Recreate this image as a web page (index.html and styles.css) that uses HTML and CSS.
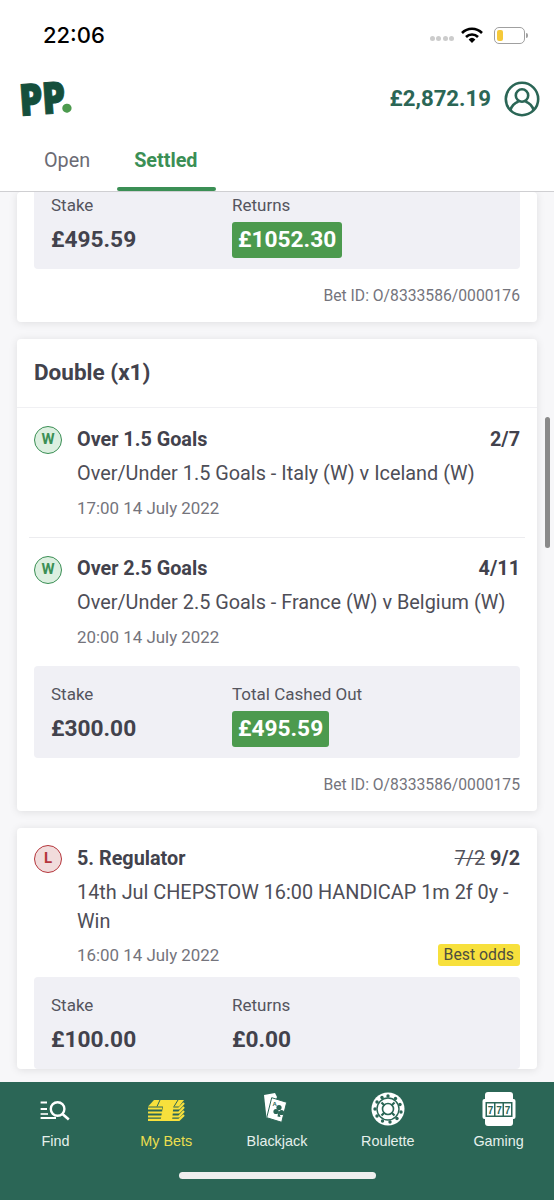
FILE: index.html
```html
<!DOCTYPE html>
<html lang="en">
<head>
  <meta charset="UTF-8">
  <meta name="viewport" content="width=device-width, initial-scale=1.0">
  <title>My Bets</title>
  <link rel="stylesheet" href="styles.css">
</head>
<body>
  <div class="app">
    <div class="status-bar">
      <span class="time">22:06</span>
      <div class="status-icons">
        <span class="signal"><i></i><i></i><i></i><i></i></span>
        <svg class="wifi" width="22" height="17" viewBox="0 0 22 17">
          <path d="M1 6 A14 14 0 0 1 21 6" fill="none" stroke="#000" stroke-width="2.6"/>
          <path d="M5 10 A8.5 8.5 0 0 1 17 10" fill="none" stroke="#000" stroke-width="2.6"/>
          <path d="M7.6 12.4 A5 5 0 0 1 14.4 12.4 L11 16 Z" fill="#000"/>
        </svg>
        <span class="battery"><span class="battery-level"></span></span>
      </div>
    </div>

    <header class="top-bar">
      <div class="logo"><span class="logo-text">PP</span><span class="logo-dot"></span></div>
      <div class="account">
        <span class="balance">£2,872.19</span>
        <svg width="36" height="36" viewBox="0 0 36 36" fill="none" stroke="#2b6656" stroke-width="2.6">
          <circle cx="18" cy="18" r="16.2"/>
          <circle cx="18" cy="14.5" r="6.2"/>
          <path d="M6.5 29 C8 23.5 12 21.5 14.5 20.5 M29.5 29 C28 23.5 24 21.5 21.5 20.5"/>
        </svg>
      </div>
    </header>

    <nav class="tabs">
      <a class="tab">Open</a>
      <a class="tab active">Settled</a>
    </nav>

    <main class="bets">
      <section class="card">
        <div class="stats stats-cut">
          <div class="stat">
            <div class="stat-label">Stake</div>
            <div class="stat-value">£495.59</div>
          </div>
          <div class="stat">
            <div class="stat-label">Returns</div>
            <div class="stat-value won">£1052.30</div>
          </div>
        </div>
        <div class="bet-id">Bet ID: O/8333586/0000176</div>
      </section>

      <section class="card">
        <h2 class="card-title">Double (x1)</h2>
        <div class="leg">
          <span class="badge badge-win">W</span>
          <div class="leg-body">
            <div class="leg-head"><strong>Over 1.5 Goals</strong><strong>2/7</strong></div>
            <div class="leg-market">Over/Under 1.5 Goals - Italy (W) v Iceland (W)</div>
            <div class="leg-date">17:00 14 July 2022</div>
          </div>
        </div>
        <div class="leg leg-next">
          <span class="badge badge-win">W</span>
          <div class="leg-body">
            <div class="leg-head"><strong>Over 2.5 Goals</strong><strong>4/11</strong></div>
            <div class="leg-market">Over/Under 2.5 Goals - France (W) v Belgium (W)</div>
            <div class="leg-date">20:00 14 July 2022</div>
          </div>
        </div>
        <div class="stats">
          <div class="stat">
            <div class="stat-label">Stake</div>
            <div class="stat-value">£300.00</div>
          </div>
          <div class="stat">
            <div class="stat-label">Total Cashed Out</div>
            <div class="stat-value won">£495.59</div>
          </div>
        </div>
        <div class="bet-id">Bet ID: O/8333586/0000175</div>
      </section>

      <section class="card">
        <div class="leg leg-single">
          <span class="badge badge-loss">L</span>
          <div class="leg-body">
            <div class="leg-head"><strong>5. Regulator</strong><span><s class="old-odds">7/2</s> <strong>9/2</strong></span></div>
            <div class="leg-market">14th Jul CHEPSTOW 16:00 HANDICAP 1m 2f 0y - Win</div>
            <div class="leg-foot">
              <div class="leg-date">16:00 14 July 2022</div>
              <span class="tag">Best odds</span>
            </div>
          </div>
        </div>
        <div class="stats">
          <div class="stat">
            <div class="stat-label">Stake</div>
            <div class="stat-value">£100.00</div>
          </div>
          <div class="stat">
            <div class="stat-label">Returns</div>
            <div class="stat-value">£0.00</div>
          </div>
        </div>
      </section>

      <div class="scrollbar"></div>
    </main>

    <footer class="bottom-nav">
      <div class="nav-items">
        <a class="nav-item">
          <svg width="32" height="36" viewBox="0 0 32 36" fill="none" stroke="#fff">
            <path d="M1.6 11.5 H8 M1.6 18 H8 M1.6 27 H17" stroke-width="2.2"/>
            <path d="M1.6 23 H9" stroke-width="1.6"/>
            <circle cx="18.6" cy="18" r="6.8" stroke-width="2.4"/>
            <path d="M23.5 23 L29.8 28.5" stroke-width="2.6"/>
          </svg>
          <span>Find</span>
        </a>
        <a class="nav-item current">
          <svg width="38" height="36" viewBox="0 0 38 36">
            <path d="M7 9 H37 L32 15.5 H1 Z" fill="#f7e03c"/>
            <path d="M1 17.5 H15 M1 21.5 H15 M1 25.5 H15 M1 28.8 H15" stroke="#f7e03c" stroke-width="2.2"/>
            <path d="M24 17.5 H32 L37 12 M24 21.5 H32 L37 16 M24 25.5 H32 L37 20 M24 28.8 H32 L37 24" fill="none" stroke="#f7e03c" stroke-width="2.2"/>
            <path d="M17 9 H27 L25 30 H13.5 Z" fill="#f7e03c"/>
            <path d="M13 9 L10 15.5 M31 9 L27 15.5" stroke="#2b6656" stroke-width="1"/>
          </svg>
          <span>My Bets</span>
        </a>
        <a class="nav-item">
          <svg width="30" height="36" viewBox="0 0 30 36">
            <path d="M2 4 L13 2 L15 6 L6 26 L4.5 27 Z" fill="#fff"/>
            <path d="M9.7 6.7 L24.7 11.3 L19.7 31.3 L4.7 26.7 Z" fill="#fff" stroke="#2b6656" stroke-width="1"/>
            <text x="10.5" y="15" class="card-pip">A</text>
            <circle cx="17" cy="16.5" r="2.6" fill="#2b6656"/>
            <circle cx="14" cy="20.5" r="2.6" fill="#2b6656"/>
            <circle cx="19.5" cy="21.5" r="2.6" fill="#2b6656"/>
            <path d="M16.5 19 L15.5 25.5 L18.5 26 Z" fill="#2b6656"/>
          </svg>
          <span>Blackjack</span>
        </a>
        <a class="nav-item">
          <svg width="34" height="36" viewBox="0 0 34 36">
            <circle cx="17" cy="18" r="16.5" fill="#fff"/>
            <circle cx="17" cy="18" r="11" fill="none" stroke="#2b6656" stroke-width="1.4"/>
            <g fill="#2b6656">
              <circle cx="17" cy="5" r="1.7"/><circle cx="24.5" cy="7.5" r="1.7"/><circle cx="29" cy="13.5" r="1.7"/>
              <circle cx="30" cy="21" r="1.7"/><circle cx="26" cy="27.5" r="1.7"/><circle cx="19" cy="31" r="1.7"/>
              <circle cx="11.5" cy="30" r="1.7"/><circle cx="6" cy="25" r="1.7"/><circle cx="4" cy="18" r="1.7"/>
              <circle cx="6" cy="11" r="1.7"/><circle cx="11" cy="6.5" r="1.7"/>
            </g>
            <circle cx="17" cy="18" r="5.5" fill="none" stroke="#2b6656" stroke-width="1.6"/>
            <path d="M10.5 11.5 L13.5 14.5 M23.5 11.5 L20.5 14.5 M10.5 24.5 L13.5 21.5 M23.5 24.5 L20.5 21.5" stroke="#2b6656" stroke-width="2.2"/>
          </svg>
          <span>Roulette</span>
        </a>
        <a class="nav-item">
          <svg width="34" height="36" viewBox="0 0 34 36">
            <rect x="3" y="1" width="28" height="34" rx="3" fill="#fff"/>
            <rect x="0.5" y="8" width="33" height="20" rx="2" fill="#fff"/>
            <rect x="3.5" y="11" width="27" height="15" fill="#2b6656"/>
            <rect x="5" y="12.5" width="7" height="12" fill="#fff"/>
            <rect x="13.5" y="12.5" width="7" height="12" fill="#fff"/>
            <rect x="22" y="12.5" width="7" height="12" fill="#fff"/>
            <text x="8.5" y="22.5" class="reel">7</text>
            <text x="17" y="22.5" class="reel">7</text>
            <text x="25.5" y="22.5" class="reel">7</text>
          </svg>
          <span>Gaming</span>
        </a>
      </div>
      <div class="home-indicator"></div>
    </footer>
  </div>
</body>
</html>
```

FILE: styles.css
```css
* {
  box-sizing: border-box;
}

html, body {
  margin: 0;
  padding: 0;
  height: 100%;
}

body {
  font-family: Roboto, Arial, sans-serif;
  background-color: #f7f7f9;
  color: #42424c;
  overflow: hidden;
}

.app {
  height: 1200px;
  display: flex;
  flex-direction: column;
}

/* status bar */
.status-bar {
  height: 70px;
  flex-shrink: 0;
  background-color: #fff;
  display: flex;
  align-items: center;
  justify-content: space-between;
  padding: 0 29px 0 43px;
}

.time {
  font-family: Inter, Arial, sans-serif;
  font-size: 22px;
  font-weight: 500;
  color: #000;
}

.status-icons {
  display: flex;
  align-items: center;
}

.signal {
  display: flex;
  gap: 1.5px;
  margin: 7px 7px 0 0;
}

.signal i {
  width: 5px;
  height: 5px;
  border-radius: 50%;
  background-color: #ccc;
}

.wifi {
  margin-right: 11px;
}

.battery {
  position: relative;
  width: 31px;
  height: 17px;
  padding: 2px;
  border: 1px solid #a0a0a0;
  border-radius: 5px;
}

.battery::after {
  content: "";
  position: absolute;
  right: -4px;
  top: 5px;
  width: 2px;
  height: 5px;
  background-color: #a0a0a0;
  border-radius: 0 2px 2px 0;
}

.battery-level {
  display: block;
  width: 6px;
  height: 100%;
  background-color: #f5c93a;
  border-radius: 2px;
}

/* header */
.top-bar {
  height: 58px;
  flex-shrink: 0;
  background-color: #fff;
  display: flex;
  align-items: center;
  justify-content: space-between;
  padding: 0 14px 0 19px;
}

.logo {
  display: flex;
  align-items: flex-end;
  transform: rotate(-4deg) scaleX(0.85);
  transform-origin: left center;
}

.logo-text {
  font-family: "Open Sans", Arial, sans-serif;
  font-size: 44px;
  font-weight: 800;
  line-height: 36px;
  letter-spacing: -1px;
  color: #154f3c;
  -webkit-text-stroke: 1px #154f3c;
}

.logo-dot {
  width: 11px;
  height: 9.5px;
  margin: 0 0 1px -4px;
  border-radius: 50%;
  background-color: #4c9a4e;
}

.account {
  display: flex;
  align-items: center;
  gap: 13px;
}

.balance {
  margin-bottom: 3px;
  font-size: 22.2px;
  font-weight: 700;
  color: #2b6656;
}

/* tabs */
.tabs {
  height: 64px;
  flex-shrink: 0;
  background-color: #fff;
  border-bottom: 1px solid #cfcfd2;
  display: flex;
  padding-left: 27px;
}

.tab {
  position: relative;
  height: 63px;
  padding: 15px 17px 0;
  font-size: 19.8px;
  line-height: 36px;
  color: #6b6b74;
}

.tab.active {
  margin-left: 10px;
  padding-right: 19px;
  font-weight: 700;
  color: #3b8f55;
}

.tab.active::after {
  content: "";
  position: absolute;
  left: 0;
  right: 0;
  bottom: 0;
  height: 4px;
  border-radius: 2px;
  background-color: #3b8f55;
}

/* bets list */
.bets {
  position: relative;
  flex: 1;
  min-height: 0;
  overflow: hidden;
  padding: 0 17px;
  display: flex;
  flex-direction: column;
  gap: 17px;
}

.card {
  flex-shrink: 0;
  background-color: #fff;
  border-radius: 4px;
  padding: 0 17px;
  box-shadow: 0 1px 8px rgba(0, 0, 0, 0.1);
}

.card-title {
  margin: 0 -17px;
  padding: 0 17px;
  height: 69px;
  border-bottom: 1px solid #f0f0f3;
  font-size: 22.5px;
  font-weight: 700;
  line-height: 66px;
}

.leg {
  display: flex;
  gap: 15px;
  padding-top: 17px;
  height: 129px;
}

.card-title + .leg {
  padding-top: 18px;
}

.leg-next {
  margin: 0 -5px;
  padding: 17px 5px 0;
  border-top: 1px solid #ececef;
}

.leg-next .badge {
  margin-top: 1px;
}

.leg-single {
  height: auto;
  padding-bottom: 10px;
}

.badge {
  width: 28px;
  height: 28px;
  flex-shrink: 0;
  border-radius: 50%;
  border: 1.5px solid;
  font-size: 15px;
  font-weight: 700;
  line-height: 25px;
  text-align: center;
}

.badge-win {
  color: #3b8f55;
  border-color: #3b8f55;
  background-color: #dcefe0;
}

.badge-loss {
  color: #b5363c;
  border-color: #b5363c;
  background-color: #f1dcdc;
}

.leg-body {
  flex: 1;
  min-width: 0;
}

.leg-head {
  display: flex;
  justify-content: space-between;
  padding-top: 1px;
  font-size: 19.8px;
  line-height: 26px;
}

.leg-market {
  margin-top: 6px;
  font-size: 19.85px;
  line-height: 29px;
  color: #4e4e57;
}

.leg-date {
  margin-top: 8px;
  font-size: 16.9px;
  line-height: 24px;
  color: #74747c;
}

.leg-foot {
  display: flex;
  justify-content: space-between;
  align-items: flex-end;
}

.leg-foot .leg-date {
  margin-top: 7px;
}

.old-odds {
  font-weight: 400;
  color: #55555e;
}

.tag {
  height: 22px;
  margin-bottom: 1px;
  padding: 0 6px;
  border-radius: 3px;
  background-color: #f7e03c;
  font-size: 15.8px;
  line-height: 22px;
  color: #4e4e40;
}

.stats {
  display: flex;
  height: 92px;
  padding: 17px 17px 0;
  border-radius: 4px;
  background-color: #f0f0f5;
}

.stats-cut {
  height: 77px;
  padding-top: 2px;
  border-radius: 0 0 4px 4px;
}

.stat {
  width: 181px;
}

.stat-label {
  font-size: 17px;
  line-height: 22px;
  color: #55555e;
}

.stat-value {
  display: inline-block;
  margin-top: 6px;
  font-size: 22.7px;
  font-weight: 700;
  line-height: 36px;
}

.stat-value.won {
  padding: 0 6px;
  border-radius: 3px;
  background-color: #4c9a4e;
  color: #fff;
}

.bet-id {
  height: 53px;
  font-size: 15.7px;
  line-height: 54px;
  text-align: right;
  color: #74747c;
}

.scrollbar {
  position: absolute;
  top: 225px;
  right: 4px;
  width: 5px;
  height: 131px;
  border-radius: 3px;
  background-color: #8a8a8a;
}

/* bottom nav */
.bottom-nav {
  height: 118px;
  flex-shrink: 0;
  background-color: #2b6656;
}

.nav-items {
  display: grid;
  grid-template-columns: repeat(5, 1fr);
  padding-top: 9px;
}

.nav-item {
  display: flex;
  flex-direction: column;
  align-items: center;
  font-family: "Liberation Sans", Arial, sans-serif;
  font-size: 14.4px;
  color: #e6f0ec;
}

.nav-item span {
  margin-top: 6px;
}

.nav-item.current {
  color: #ecdf4e;
}

.card-pip {
  font-family: "Liberation Sans", Arial, sans-serif;
  font-size: 6px;
  font-weight: 700;
  fill: #2b6656;
}

.reel {
  font-family: "Liberation Sans", Arial, sans-serif;
  font-size: 10px;
  font-weight: 700;
  text-anchor: middle;
  fill: #2b6656;
}

.home-indicator {
  width: 197px;
  height: 7px;
  margin: 23px auto 0;
  border-radius: 4px;
  background-color: #efefef;
}
```
